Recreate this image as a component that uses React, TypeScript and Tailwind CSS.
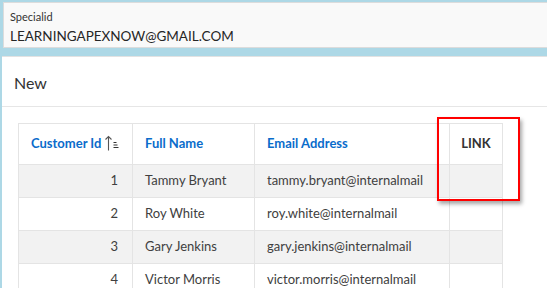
const rows = [
  { id: 1, name: "Tammy Bryant", email: "tammy.bryant@internalmail" },
  { id: 2, name: "Roy White", email: "roy.white@internalmail" },
  { id: 3, name: "Gary Jenkins", email: "gary.jenkins@internalmail" },
  { id: 4, name: "Victor Morris", email: "victor.morris@internalmail" },
];

function SortIcon() {
  return (
    <svg width="16" height="16" viewBox="0 0 16 16" className="ml-[3px] inline-block align-[-3px]" fill="none">
      <path d="M4.5 15.5V1.5M1.5 4.5L4.5 1.5L7.5 4.5" stroke="#555" strokeWidth="1.1" />
      <path d="M9.5 7.5h3M9.5 10h4M9.5 12.5h5" stroke="#333" strokeWidth="1" />
    </svg>
  );
}

export default function App() {
  return (
    <div
      className="w-[547px] h-[288px] overflow-hidden bg-[#add8e6] pl-[3px] pt-[2px] relative"
      style={{ fontFamily: "Lato, 'Noto Sans', sans-serif" }}
    >
      <div className="h-[46px] bg-[#f9f9f9] border border-[#dcdcdc] border-r-0 pl-[6px] pt-[7px]">
        <div className="text-[11px] leading-[14px] text-[#333]">Specialid</div>
        <div className="text-[13.5px] leading-[20px] text-[#262626] mt-[2px]">LEARNINGAPEXNOW@GMAIL.COM</div>
      </div>

      <div className="mt-[8px] ml-[-1px] bg-white border-t border-[#e2e2e2] h-[240px]">
        <div className="h-[50px] border-b border-[#e6e6e6] flex items-center pl-[12px] pt-[2px]">
          <span className="text-[16px] text-[#333]">New</span>
        </div>

        <div className="pt-[16px] pl-[16px]">
          <table className="border-collapse text-[13px]">
            <thead>
              <tr className="h-[41px]">
                <th className="w-[114px] border border-[#e4e4e4] text-left pl-[12px] font-bold text-[#0a6ccb]">
                  Customer Id<SortIcon />
                </th>
                <th className="w-[122px] border border-[#e4e4e4] text-left pl-[12px] font-bold text-[#0a6ccb]">
                  Full Name
                </th>
                <th className="w-[195px] border border-[#e4e4e4] text-left pl-[12px] font-bold text-[#0a6ccb]">
                  Email Address
                </th>
                <th className="w-[53px] border border-[#e4e4e4] text-center font-bold text-[#333]">LINK</th>
              </tr>
            </thead>
            <tbody>
              {rows.map((r, i) => (
                <tr key={r.id} className={`h-[33px] ${i % 2 === 0 ? "bg-[#f2f2f2]" : "bg-white"}`}>
                  <td className="border border-[#e4e4e4] text-right pr-[14px] text-[#404040]">{r.id}</td>
                  <td className="border border-[#e4e4e4] pl-[12px] text-[#404040]">{r.name}</td>
                  <td className="border border-[#e4e4e4] pl-[12px] text-[#404040]">{r.email}</td>
                  <td className="border border-[#e4e4e4]"></td>
                </tr>
              ))}
            </tbody>
          </table>
        </div>
      </div>

      <div className="absolute left-[437px] top-[117px] w-[83px] h-[84px] border-2 border-[#ff0000] shadow-[2px_3px_4px_rgba(0,0,0,0.35)]" />
    </div>
  );
}
